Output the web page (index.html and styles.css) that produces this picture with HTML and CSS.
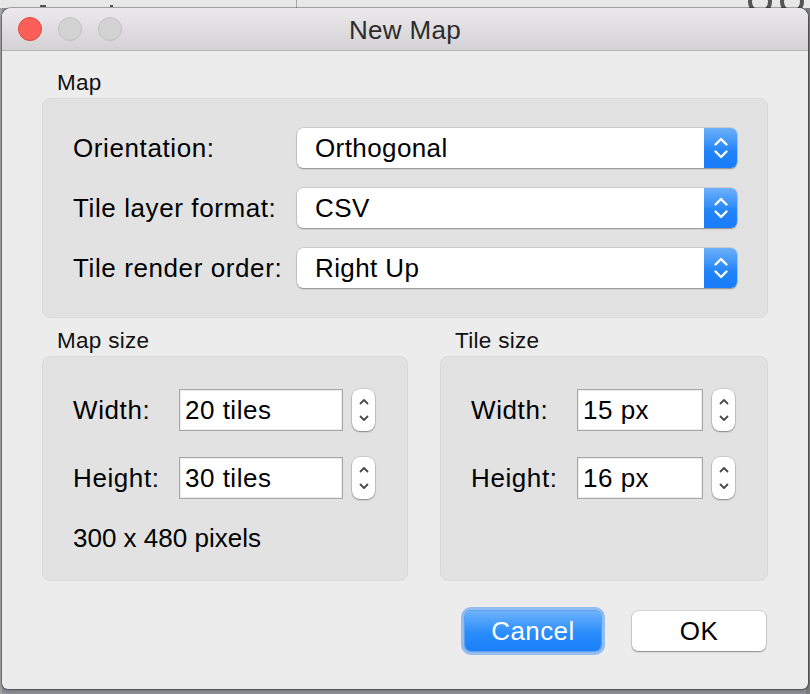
FILE: index.html
```html
<!DOCTYPE html>
<html>
<head>
<meta charset="utf-8">
<link rel="stylesheet" href="styles.css">
</head>
<body>
<div class="screen">
  <div class="backdrop-top">
    <span class="bd-mark m1"></span>
    <span class="bd-mark m2"></span>
    <span class="bd-divider"></span>
    <span class="bd-icons"><span class="bd-icon"></span><span class="bd-icon"></span></span>
  </div>
  <div class="window">
    <div class="titlebar">
      <div class="lights">
        <span class="light close"></span>
        <span class="light"></span>
        <span class="light"></span>
      </div>
      <div class="title">New Map</div>
    </div>
    <div class="content">
      <div class="group">
        <div class="group-title">Map</div>
        <div class="group-box map-box">
          <div class="combo-row">
            <span class="label">Orientation:</span>
            <div class="combo"><span class="combo-text">Orthogonal</span><span class="combo-btn"><svg width="16" height="26" viewBox="0 0 16 26"><path d="M2.5 9.5 L8 4 L13.5 9.5 M2.5 16.5 L8 22 L13.5 16.5" fill="none" stroke="#fff" stroke-width="2.4" stroke-linecap="round" stroke-linejoin="round"/></svg></span></div>
          </div>
          <div class="combo-row">
            <span class="label">Tile layer format:</span>
            <div class="combo"><span class="combo-text">CSV</span><span class="combo-btn"><svg width="16" height="26" viewBox="0 0 16 26"><path d="M2.5 9.5 L8 4 L13.5 9.5 M2.5 16.5 L8 22 L13.5 16.5" fill="none" stroke="#fff" stroke-width="2.4" stroke-linecap="round" stroke-linejoin="round"/></svg></span></div>
          </div>
          <div class="combo-row">
            <span class="label">Tile render order:</span>
            <div class="combo"><span class="combo-text">Right Up</span><span class="combo-btn"><svg width="16" height="26" viewBox="0 0 16 26"><path d="M2.5 9.5 L8 4 L13.5 9.5 M2.5 16.5 L8 22 L13.5 16.5" fill="none" stroke="#fff" stroke-width="2.4" stroke-linecap="round" stroke-linejoin="round"/></svg></span></div>
          </div>
        </div>
      </div>

      <div class="size-groups">
        <div class="group map-size">
          <div class="group-title">Map size</div>
          <div class="group-box size-box">
            <div class="spin-row">
              <span class="label short">Width:</span>
              <div class="field wide">20 tiles</div>
              <div class="spinner"><svg width="12" height="30" viewBox="0 0 12 30"><path d="M2.5 8.5 L6 5 L9.5 8.5 M2.5 21.5 L6 25 L9.5 21.5" fill="none" stroke="#4a4a4a" stroke-width="1.8" stroke-linecap="round" stroke-linejoin="round"/></svg></div>
            </div>
            <div class="spin-row">
              <span class="label short">Height:</span>
              <div class="field wide">30 tiles</div>
              <div class="spinner"><svg width="12" height="30" viewBox="0 0 12 30"><path d="M2.5 8.5 L6 5 L9.5 8.5 M2.5 21.5 L6 25 L9.5 21.5" fill="none" stroke="#4a4a4a" stroke-width="1.8" stroke-linecap="round" stroke-linejoin="round"/></svg></div>
            </div>
            <div class="pixels">300 x 480 pixels</div>
          </div>
        </div>
        <div class="group tile-size">
          <div class="group-title">Tile size</div>
          <div class="group-box size-box">
            <div class="spin-row">
              <span class="label short">Width:</span>
              <div class="field narrow">15 px</div>
              <div class="spinner"><svg width="12" height="30" viewBox="0 0 12 30"><path d="M2.5 8.5 L6 5 L9.5 8.5 M2.5 21.5 L6 25 L9.5 21.5" fill="none" stroke="#4a4a4a" stroke-width="1.8" stroke-linecap="round" stroke-linejoin="round"/></svg></div>
            </div>
            <div class="spin-row">
              <span class="label short">Height:</span>
              <div class="field narrow">16 px</div>
              <div class="spinner"><svg width="12" height="30" viewBox="0 0 12 30"><path d="M2.5 8.5 L6 5 L9.5 8.5 M2.5 21.5 L6 25 L9.5 21.5" fill="none" stroke="#4a4a4a" stroke-width="1.8" stroke-linecap="round" stroke-linejoin="round"/></svg></div>
            </div>
          </div>
        </div>
      </div>

      <div class="buttons">
        <button class="btn primary">Cancel</button>
        <button class="btn">OK</button>
      </div>
    </div>
  </div>
</div>
</body>
</html>
```
FILE: styles.css
```css
* { box-sizing: border-box; }
html, body { margin: 0; padding: 0; }
body {
  font-family: "Liberation Sans", Arial, sans-serif;
  background: #8e9298;
}
.screen {
  position: relative;
  width: 810px;
  height: 694px;
  overflow: hidden;
  padding: 8px 2px 0 2px;
  background:
    linear-gradient(to bottom, #e8e8e8 0, #e8e8e8 8px, transparent 8px),
    linear-gradient(to right, #a4a4a4 0, #a4a4a4 2px, #8f9399 2px, #8f9399 806px, #7c7c7c 806px);
}
.backdrop-top {
  position: absolute;
  left: 0; top: 0; width: 810px; height: 8px;
  overflow: hidden;
}
.bd-mark {
  position: absolute;
  top: 5px; height: 2px;
  background: #555;
}
.bd-mark.m1 { left: 40px; width: 6px; }
.bd-mark.m2 { left: 110px; width: 3px; }
.bd-divider {
  position: absolute;
  left: 296px; top: 0; width: 1px; height: 8px;
  background: #a8a8a8;
}
.bd-icons { position: absolute; left: 748px; top: -10px; display: flex; gap: 8px; }
.bd-icon { width: 24px; height: 24px; border-radius: 50%; border: 4px solid #555; }

.window {
  position: relative;
  width: 806px;
  height: 681px;
  background: #ececec;
  border-radius: 9px 9px 6px 6px;
  box-shadow: 0 0 0 1px rgba(0,0,0,0.28), 0 2px 4px rgba(0,0,0,0.25);
  display: flex;
  flex-direction: column;
  overflow: hidden;
}
.titlebar {
  height: 43px;
  flex: none;
  background: linear-gradient(to bottom, #ebe9eb, #d4d2d4);
  border-bottom: 1px solid #b6b6b6;
  display: flex;
  align-items: center;
  position: relative;
}
.lights {
  display: flex;
  gap: 16px;
  padding-left: 16px;
}
.light {
  width: 24px; height: 24px;
  border-radius: 50%;
  background: #d3d3d3;
  border: 1px solid #c1c1c1;
}
.light.close { background: #fc5f57; border-color: #e0443e; }
.title {
  position: absolute;
  left: 0; right: 0; top: 0; bottom: 0;
  display: flex; align-items: center; justify-content: center;
  font-size: 26px;
  color: #2c2c2c;
  letter-spacing: 0.3px;
  padding-top: 2px;
}

.content {
  padding: 19px 40px 0 40px;
  display: flex;
  flex-direction: column;
}
.group-title {
  height: 26px;
  line-height: 26px;
  font-size: 22.5px;
  color: #111;
  padding-left: 15px;
  margin-bottom: 2px;
  letter-spacing: 0.3px;
}
.group-box {
  background: #e2e2e2;
  border: 1px solid #d9d9d9;
  border-radius: 8px;
}
.label {
  font-size: 26px;
  color: #000;
  letter-spacing: 0.6px;
}
.map-box {
  height: 220px;
  padding: 29px 30px 0 30px;
  display: flex;
  flex-direction: column;
  gap: 20px;
}
.combo-row {
  display: flex;
  align-items: center;
  height: 40px;
}
.combo-row .label { width: 224px; flex: none; }
.combo {
  flex: 1;
  height: 40px;
  background: #fff;
  border-radius: 6px;
  box-shadow: 0 0 0 0.5px rgba(0,0,0,0.18), 0 1px 1.5px rgba(0,0,0,0.3);
  display: flex;
  align-items: center;
  overflow: hidden;
}
.combo-text {
  flex: 1;
  padding-left: 18px;
  font-size: 26px;
  letter-spacing: 0.4px;
  color: #000;
}
.combo-btn {
  width: 33px;
  height: 40px;
  background: linear-gradient(to bottom, #6db0fa, #1f83fb 60%, #1a7cf8);
  display: flex;
  align-items: center;
  justify-content: center;
}
.combo-btn svg { display: block; margin-top: -1px; }

.size-groups {
  margin-top: 10px;
  display: flex;
  gap: 32px;
}
.map-size { width: 366px; }
.tile-size { width: 328px; }
.size-box {
  height: 225px;
  padding: 32px 30px 0 30px;
  display: flex;
  flex-direction: column;
  gap: 26px;
}
.spin-row {
  display: flex;
  align-items: center;
  height: 42px;
}
.spin-row .label { width: 106px; flex: none; }
.field {
  height: 42px;
  background: #fff;
  border: 1px solid #a7a7a7;
  box-shadow: inset 0 0 0 1px #ececec;
  font-size: 26px;
  letter-spacing: 0.5px;
  line-height: 40px;
  padding-left: 5px;
  color: #000;
}
.field.wide { width: 164px; }
.field.narrow { width: 126px; }
.spinner {
  margin-left: 9px;
  width: 23px;
  height: 42px;
  background: #fff;
  border-radius: 8px;
  box-shadow: 0 0 0 0.5px rgba(0,0,0,0.2), 0 1px 1.5px rgba(0,0,0,0.35);
  display: flex;
  align-items: center;
  justify-content: center;
}
.spinner svg { display: block; }
.pixels {
  font-size: 26px;
  letter-spacing: 0;
  color: #000;
  margin-top: -2px;
}

.buttons {
  margin-top: 30px;
  display: flex;
  justify-content: flex-end;
  gap: 31px;
  padding-right: 2px;
}
.btn {
  font-family: "Liberation Sans", Arial, sans-serif;
  font-size: 26px;
  letter-spacing: 0.4px;
  height: 40px;
  width: 134px;
  border: none;
  border-radius: 6px;
  background: #fff;
  color: #000;
  box-shadow: 0 0 0 0.5px rgba(0,0,0,0.2), 0 1px 1.5px rgba(0,0,0,0.35);
  padding: 0;
  margin: 0;
}
.btn.primary {
  width: 136px;
  color: #fff;
  background: linear-gradient(to bottom, #6cb3fa, #2a8cfb 55%, #1a7ff9);
  box-shadow: 0 0 0 1px #5b9ff0, 0 0 0 4px rgba(118,172,240,0.75);
}
```
